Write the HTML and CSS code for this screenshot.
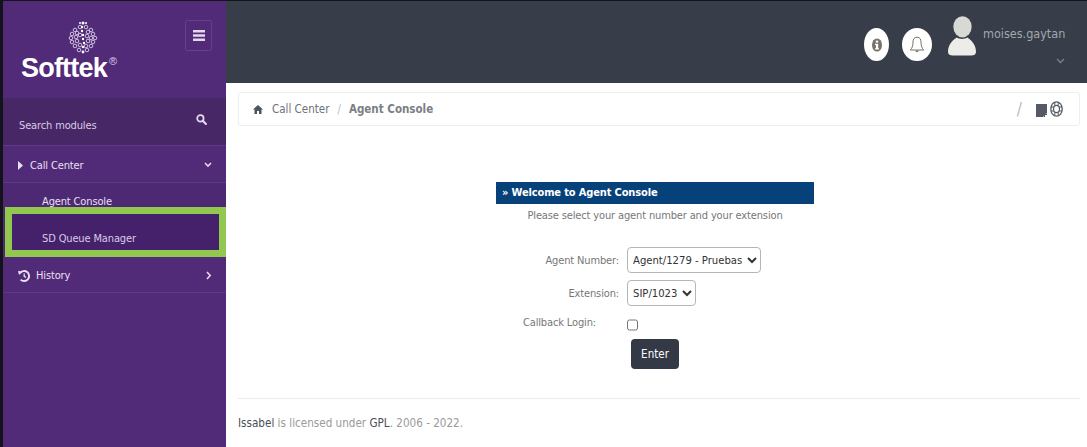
FILE: index.html
```html
<!DOCTYPE html>
<html lang="en">
<head>
<meta charset="utf-8">
<title>Agent Console</title>
<link rel="stylesheet" href="styles.css">
</head>
<body>
<div class="app">
  <aside class="sidebar">
    <div class="brand">
      <div class="logo">
        <svg class="logo-mark" width="30" height="34" viewBox="0 0 30 34">
          <g fill="none" stroke="#d9cde6" stroke-width="0.9">
            <circle cx="7" cy="9" r="1.8"/><circle cx="12" cy="6" r="1.8"/><circle cx="18" cy="6" r="1.8"/><circle cx="23" cy="9" r="1.8"/>
            <circle cx="4" cy="13" r="1.8"/><circle cx="9" cy="12" r="1.8"/><circle cx="20" cy="11" r="1.8"/><circle cx="25" cy="13" r="1.8"/>
            <circle cx="3" cy="17" r="1.8"/><circle cx="8" cy="16" r="1.8"/><circle cx="12" cy="14" r="1.8"/><circle cx="19" cy="15" r="1.8"/><circle cx="23" cy="17" r="1.8"/><circle cx="27" cy="17" r="1.8"/>
            <circle cx="4" cy="21" r="1.8"/><circle cx="9" cy="20" r="1.8"/><circle cx="12" cy="24" r="1.8"/><circle cx="20" cy="20" r="1.8"/><circle cx="25" cy="21" r="1.8"/>
            <circle cx="7" cy="25" r="1.8"/><circle cx="18" cy="25" r="1.8"/><circle cx="23" cy="25" r="1.8"/>
            <circle cx="11" cy="29" r="1.8"/><circle cx="19" cy="29" r="1.8"/>
          </g>
          <g fill="#fff">
            <circle cx="15" cy="2" r="1.5"/><circle cx="12" cy="2" r="1"/><circle cx="18" cy="2" r="1"/>
            <circle cx="14" cy="6" r="1.2"/><circle cx="14" cy="10" r="1.2"/><circle cx="15" cy="14" r="1.2"/><circle cx="15" cy="18" r="1.2"/><circle cx="16" cy="22" r="1.2"/><circle cx="15" cy="26" r="1.2"/><circle cx="15" cy="31" r="1.4"/>
          </g>
        </svg>
        <div class="wordmark">Softtek<sup class="reg">®</sup></div>
      </div>
      <button class="menu-toggle" type="button" aria-label="Menu">
        <svg width="12" height="11" viewBox="0 0 12 11"><path d="M0 0h12v2.4H0zM0 4.3h12v2.4H0zM0 8.6h12V11H0z" fill="#e4d8f0"/></svg>
      </button>
    </div>
    <div class="search">
      <span>Search modules</span>
      <svg width="11" height="11" viewBox="0 0 12 12"><circle cx="4.8" cy="4.8" r="3.5" fill="none" stroke="#e4d8f0" stroke-width="1.9"/><path d="M7.4 7.4l3.4 3.4" stroke="#e4d8f0" stroke-width="2.3" stroke-linecap="round"/></svg>
    </div>
    <nav class="nav">
      <div class="nav-item nav-callcenter">
        <span class="nav-label">
          <svg class="nav-caret" width="5" height="9" viewBox="0 0 5 9"><path d="M0 0l5 4.5L0 9z" fill="#e9e0f2"/></svg>
          Call Center
        </span>
        <svg width="8" height="6" viewBox="0 0 8 6"><path d="M1 1l3 3 3-3" fill="none" stroke="#e4d8f0" stroke-width="1.6"/></svg>
      </div>
      <div class="nav-sub">Agent Console</div>
      <div class="nav-sub nav-sub-highlight">SD Queue Manager</div>
      <div class="nav-item nav-history">
        <span class="nav-label nav-label-history">
          <svg width="12" height="12" viewBox="0 0 12 12"><path d="M2 3.2A5 5 0 1 1 2.6 9.6" fill="none" stroke="#e9e0f2" stroke-width="1.9"/><path d="M0 1l4.6.4L1 5z" fill="#e9e0f2"/><path d="M6.2 3.4v3l1.8 1" fill="none" stroke="#e9e0f2" stroke-width="1.3"/></svg>
          History
        </span>
        <svg width="6" height="9" viewBox="0 0 6 9"><path d="M1 1l3.2 3.5L1 8" fill="none" stroke="#e4d8f0" stroke-width="1.6"/></svg>
      </div>
    </nav>
  </aside>
  <main class="main">
    <header class="topbar">
      <span class="round-btn round-info">
        <svg width="10" height="14" viewBox="0 0 10 14"><ellipse cx="5" cy="7" rx="5" ry="6.6" fill="#77726a"/><rect x="3.8" y="2.6" width="2.4" height="2" fill="#fff"/><path d="M3 5.8h3.2v4.4H7v1.2H3v-1.2h.9V7H3z" fill="#fff"/></svg>
      </span>
      <span class="round-btn round-bell">
        <svg width="16" height="18" viewBox="0 0 16 18"><path d="M8 1.2C5 1.2 4 3.6 4 6c0 4-1 6.4-2.8 8h13.6C13 12.4 12 10 12 6c0-2.4-1-4.800-4-4.800z" fill="none" stroke="#77726a" stroke-width="1"/><path d="M6.400 14.600a1.600 1.600 0 0 0 3.200 0z" fill="#77726a"/></svg>
      </span>
      <svg class="avatar" width="28" height="40" viewBox="0 0 29 41"><ellipse cx="15" cy="11" rx="9.500" ry="11" fill="#d8d8d4"/><path d="M9 22C3 26 0 31 0 37c0 2.500 2 3.600 5 3.600h19c3 0 5-1.100 5-3.600 0-6-3-11-9-15-3.400 2-7.600 2-11 0z" fill="#ecece8"/></svg>
      <div class="user">
        <span class="user-name">moises.gaytan</span>
        <svg class="user-caret" width="9" height="6" viewBox="0 0 9 6"><path d="M1 1l3.500 3.500L8 1" fill="none" stroke="#7c818c" stroke-width="1.300"/></svg>
      </div>
    </header>
    <div class="content">
      <div class="breadcrumb">
        <svg class="home" width="10" height="9" viewBox="0 0 10 9"><path d="M5 0l5 4.500H8.500V9H6V6H4v3H1.500V4.500H0z" fill="#4d5561"/></svg>
        <span class="crumb">Call Center</span>
        <span class="crumb-sep">/</span>
        <span class="crumb crumb-current">Agent Console</span>
        <span class="crumb-tools">
          <span class="crumb-sep crumb-sep-tools">/</span>
          <svg class="tool-doc" width="11" height="13" viewBox="0 0 11 13"><path d="M0 0h11v9l-4 4H0z" fill="#555b66"/><path d="M8 10h3v1H9v2H8z" fill="#555b66"/></svg>
          <svg width="13" height="16" viewBox="0 0 13 16"><ellipse cx="6.500" cy="8" rx="5.700" ry="7.200" fill="none" stroke="#555b66" stroke-width="1.300"/><ellipse cx="6.500" cy="8" rx="3" ry="3.600" fill="none" stroke="#555b66" stroke-width="1.200"/><path d="M4.800 1v3.600M8.200 1v3.600M4.800 11.400V15M8.200 11.400V15M1 6h2.800M1 10h2.800M9.200 6H12M9.200 10H12" stroke="#555b66" stroke-width="1"/></svg>
        </span>
      </div>
      <form class="login">
        <h1 class="login-title">» Welcome to Agent Console</h1>
        <p class="login-hint">Please select your agent number and your extension</p>
        <div class="login-grid">
          <label class="field-label" for="agent">Agent Number:</label>
          <select class="field-select" id="agent"><option>Agent/1279 - Pruebas</option></select>
          <label class="field-label" for="ext">Extension:</label>
          <select class="field-select" id="ext"><option>SIP/1023</option></select>
          <label class="field-label field-label-callback" for="cb">Callback Login:</label>
          <input class="field-check" id="cb" type="checkbox">
        </div>
        <button class="enter" type="button">Enter</button>
      </form>
      <footer class="footer"><span class="footer-link">Issabel</span> is licensed under <span class="footer-link">GPL</span>. 2006 - 2022.</footer>
    </div>
  </main>
</div>
</body>
</html>
```
FILE: styles.css
```css
* { box-sizing: border-box; }
html, body { margin: 0; height: 100%; background: #fff; }
body {
  font-family: "DejaVu Sans Condensed", "DejaVu Sans", sans-serif;
  font-size: 11px;
  letter-spacing: -0.14px;
  overflow: hidden;
}
.app {
  display: grid;
  grid-template-columns: 223px 1fr;
  height: 447px;
  border-top: 1px solid #14141a;
  border-left: 3px solid #14121a;
}
.sidebar { background: #512a78; color: #e9e0f2; display: flex; flex-direction: column; }
.brand { height: 97px; display: flex; padding: 17px 14px 0 18px; justify-content: space-between; align-items: flex-start; }
.logo { display: flex; flex-direction: column; align-items: flex-start; width: 92px; }
.logo-mark { margin: 3px 0 0 47px; display: block; }
.wordmark { font-family: "Liberation Sans", sans-serif; font-weight: 700; font-size: 27px; line-height: 26px; color: #fff; white-space: nowrap; letter-spacing: -0.8px; }
.reg { font-size: 11px; font-weight: 400; line-height: 0; vertical-align: 12px; color: #d9cde6; letter-spacing: 0; margin-left: 2px; }
.menu-toggle { width: 27px; height: 31px; padding: 0; margin-top: 2px; background: transparent; border: 1px solid #62408a; border-radius: 2px; display: flex; align-items: center; justify-content: center; }
.search { height: 48px; background: #472765; border-bottom: 1px solid #5d3a85; display: flex; justify-content: space-between; padding: 16px 19px 0 16px; color: #d8cce6; }
.search span { padding-top: 5px; }
.nav { display: flex; flex-direction: column; }
.nav-item { height: 37px; display: flex; align-items: center; justify-content: space-between; padding: 0 14px 0 15px; border-bottom: 1px solid #5d3a85; }
.nav-callcenter { padding-top: 2px; }
.nav-label { display: flex; align-items: center; gap: 7px; }
.nav-label-history { gap: 6px; }
.nav-sub { height: 36px; display: flex; align-items: center; padding-left: 39px; background: #4d2873; }
.nav-sub-highlight { height: 50px; margin: -12px 0 0 2px; padding: 12px 0 0 30px; background: #44216a; border: 7px solid #92c84f; position: relative; color: #d8cce6; }
.nav-history { height: 36px; padding-top: 2px; }
.main { display: flex; flex-direction: column; min-width: 0; }
.topbar { height: 82px; background: #373d49; display: flex; align-items: flex-start; justify-content: flex-end; padding: 14px 0 0 0; flex: none; }
.round-btn { background: #fff; border-radius: 50%; display: flex; align-items: center; justify-content: center; margin-top: 13px; height: 33px; }
.round-info { width: 25px; margin-right: 13px; }
.round-bell { width: 30px; margin-right: 16px; }
.avatar { margin-top: 1px; display: block; }
.user { width: 111px; padding: 11px 0 0 7px; display: flex; flex-direction: column; color: #a3a7ae; font-size: 12.5px; letter-spacing: 0; }
.user-name { line-height: 15px; white-space: nowrap; }
.user-caret { margin: 17px 0 0 73px; }
.content { flex: 1; display: flex; flex-direction: column; padding: 9px 7px 0 12px; }
.breadcrumb { height: 34px; border: 1px solid #eceef0; border-radius: 3px; display: flex; align-items: center; padding: 0 16px 0 14px; color: #6d737c; font-size: 11.5px; letter-spacing: 0; }
.home { margin-right: 9px; }
.crumb-sep { color: #b9bdc3; margin: 0 8px; }
.crumb-current { font-weight: 700; color: #7a7f86; }
.crumb-tools { margin-left: auto; display: flex; align-items: center; gap: 3px; }
.crumb-sep-tools { font-size: 17px; margin: 0 11px 0 0; }
.tool-doc { margin-top: 3px; }
.login { width: 318px; margin: 56px auto 0; position: relative; left: -4px; }
.login-title { margin: 0; height: 22px; background: #064179; color: #fff; font-size: 11px; font-weight: 700; line-height: 22px; padding-left: 6px; }
.login-hint { margin: 0; text-align: center; color: #777; line-height: 24px; }
.login-grid { display: grid; grid-template-columns: 123px auto; column-gap: 8px; justify-content: start; margin-top: 19px; color: #777; row-gap: 7px; align-items: center; }
.field-label { text-align: right; }
.field-label-callback { padding-right: 23px; margin-top: 3px; white-space: nowrap; align-self: start; }
.field-select { justify-self: start; height: 26px; font: 11.2px "DejaVu Sans Condensed", "DejaVu Sans", sans-serif; color: #333; background: #fff; border: 1px solid #b5b5b5; border-radius: 4px; padding: 0 1px; }
.field-check { margin: 6px 0 0; width: 11px; height: 12px; justify-self: start; align-self: start; }
.enter { display: block; margin: 8px 0 0 135px; width: 48px; height: 30px; background: #333945; color: #fff; border: 0; border-radius: 4px; font: 11.500px "DejaVu Sans Condensed", "DejaVu Sans", sans-serif; }
.footer { margin-top: 29px; border-top: 1px solid #ececec; padding-top: 17px; color: #9a9a9a; font-size: 11.6px; letter-spacing: 0; }
.footer-link { color: #4a4f55; }
```
